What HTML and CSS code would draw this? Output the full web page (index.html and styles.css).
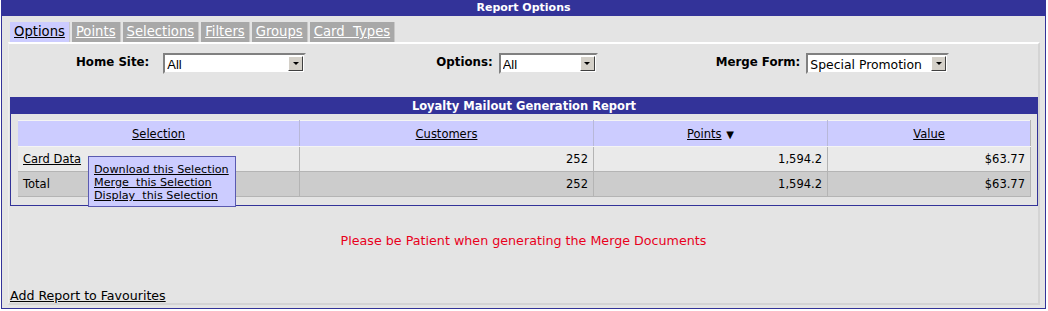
FILE: index.html
```html
<!DOCTYPE html>
<html lang="en">
<head>
  <meta charset="UTF-8">
  <title>Report Options</title>
  <link rel="stylesheet" href="styles.css">
</head>
<body>

  <div class="frame">
    <div class="frame-title">Report Options</div>

    <div class="tabs">
      <a href="#" class="tab active">Options</a>
      <a href="#" class="tab">Points</a>
      <a href="#" class="tab">Selections</a>
      <a href="#" class="tab">Filters</a>
      <a href="#" class="tab">Groups</a>
      <a href="#" class="tab">Card&nbsp;&nbsp;Types</a>
    </div>

    <div class="panel">
      <div class="filters">
        <div class="filter home">
          <label>Home Site:</label>
          <div class="dropdown wide">
            <select><option>All</option></select>
            <span class="drop-btn"></span>
          </div>
        </div>
        <div class="filter opts">
          <label>Options:</label>
          <div class="dropdown narrow">
            <select><option>All</option></select>
            <span class="drop-btn"></span>
          </div>
        </div>
        <div class="filter merge">
          <label>Merge Form:</label>
          <div class="dropdown wide">
            <select class="tahoma"><option>Special Promotion</option></select>
            <span class="drop-btn"></span>
          </div>
        </div>
      </div>

      <div class="report">
        <div class="report-title">Loyalty Mailout Generation Report</div>
        <table class="grid">
          <tr class="head">
            <th class="c1"><a href="#">Selection</a></th>
            <th class="c2"><a href="#">Customers</a></th>
            <th class="c3"><a href="#">Points</a> <span class="sort">&#9660;</span></th>
            <th class="c4"><a href="#">Value</a></th>
          </tr>
          <tr class="row">
            <td class="name"><a href="#">Card Data</a></td>
            <td>252</td>
            <td>1,594.2</td>
            <td>$63.77</td>
          </tr>
          <tr class="total">
            <td class="name">Total</td>
            <td>252</td>
            <td>1,594.2</td>
            <td>$63.77</td>
          </tr>
        </table>

        <div class="popup">
          <a href="#">Download this Selection</a>
          <a href="#">Merge&nbsp; this Selection</a>
          <a href="#">Display&nbsp; this Selection</a>
        </div>
      </div>

      <p class="notice">Please be Patient when generating the Merge Documents</p>

      <a href="#" class="favourite">Add Report to Favourites</a>
    </div>
  </div>

</body>
</html>
```

FILE: styles.css
```css
body {
  margin: 0;
  font-family: "DejaVu Sans", Verdana, sans-serif;
  font-size: 11.5px;
  color: #000;
  background: #fff;
}
a {
  color: #000;
}
.frame {
  margin: 0 2px 0 1px;
  height: 308px;
  border: 1px solid #333399;
  border-top: none;
  background: #e4e4e4;
  display: flex;
  flex-direction: column;
}
.frame-title {
  background: #333399;
  color: #fff;
  font-weight: bold;
  font-size: 11px;
  text-align: center;
  height: 16px;
  line-height: 16px;
}
.tabs {
  display: flex;
  gap: 2px;
  margin: 6px 0 0 8px;
}
.tab {
  display: block;
  background: #a8a8a8;
  color: #fff;
  font-size: 13.2px;
  padding: 0 4px;
  height: 20px;
  line-height: 20px;
  border-right: 1px solid #c8c8c8;
}
.tab.active {
  background: #ccccff;
  color: #000;
}
.panel {
  flex: 1;
  margin: 0 5px 3px 6px;
  border-top: 2px solid #fff;
  border-left: 1px solid #ececec;
  border-right: 2px solid #d4d4d4;
  border-bottom: 2px solid #d4d4d4;
  display: flex;
  flex-direction: column;
}
.filters {
  display: flex;
  align-items: flex-start;
  padding-top: 9px;
  height: 44px;
}
.filter {
  display: flex;
  align-items: flex-start;
}
.filter label {
  font-weight: bold;
  font-size: 11.8px;
  padding-top: 2px;
}
.home {
  margin-left: 67px;
  gap: 14px;
}
.opts {
  margin-left: 130px;
  gap: 6px;
}
.merge {
  margin-left: 118px;
  gap: 6px;
}
.dropdown {
  display: flex;
  align-items: center;
  height: 17px;
  background: #fff;
  border-top: 2px solid #808080;
  border-left: 2px solid #808080;
  border-right: 2px solid #e4e4e4;
  border-bottom: 2px solid #e4e4e4;
}
.dropdown.wide {
  width: 139px;
}
.dropdown.narrow {
  width: 95px;
}
.dropdown select {
  appearance: none;
  -webkit-appearance: none;
  border: none;
  background: transparent;
  flex: 1;
  min-width: 0;
  padding: 2px 0 0 2px;
  font-family: "Liberation Sans", Arial, sans-serif;
  font-size: 13px;
  color: #000;
  outline: none;
}
.dropdown select.tahoma {
  font-family: "DejaVu Sans", Verdana, sans-serif;
  font-size: 12.4px;
}
.drop-btn {
  width: 13px;
  height: 13px;
  margin-right: 1px;
  background: #d4d0c8;
  border-top: 1px solid #fff;
  border-left: 1px solid #fff;
  border-right: 1px solid #404040;
  border-bottom: 1px solid #404040;
  display: flex;
  align-items: center;
  justify-content: center;
}
.drop-btn::after {
  content: "";
  border-left: 3px solid transparent;
  border-right: 3px solid transparent;
  border-top: 3px solid #000;
}
.report {
  margin: 0 0 0 1px;
  border: 1px solid #333399;
  padding: 0 6px 8px 7px;
  position: relative;
}
.report-title {
  background: #333399;
  color: #fff;
  font-weight: bold;
  text-align: center;
  height: 16px;
  line-height: 16px;
  margin: 0 -6px 6px -7px;
}
.grid {
  width: 100%;
  border-collapse: collapse;
  border-top: 1px solid #f4f4f4;
}
.grid th,
.grid td {
  height: 24px;
  padding: 0 5px;
  font-weight: normal;
}
.grid th {
  height: 25px;
  background: #ccccff;
  border-right: 1px solid #b8b8d8;
  border-bottom: 1px solid #f4f4f4;
  text-align: center;
}
.grid td {
  text-align: right;
  border-right: 1px solid #b4b4b4;
  border-bottom: 1px solid #b4b4b4;
}
.grid th:last-child,
.grid td:last-child {
  border-right: 1px solid #b4b4b4;
}
.grid td.name {
  text-align: left;
}
.c1 { width: 271px; }
.c2 { width: 283px; }
.c3 { width: 223px; }
.row td {
  background: #eaeaea;
}
.total td {
  background: #cccccc;
}
.sort {
  font-size: 10px;
  margin-left: 1px;
}
.popup {
  position: absolute;
  left: 77px;
  top: 58px;
  width: 138px;
  padding: 6px 3px 4px 5px;
  background: #ccccff;
  border: 1px solid #5a5ab0;
  display: flex;
  flex-direction: column;
  font-size: 11.2px;
  line-height: 13px;
  white-space: nowrap;
}
.notice {
  text-align: center;
  color: #e8001c;
  font-size: 12.7px;
  margin: 27px 0 0 0;
}
.favourite {
  margin: auto 0 0 1px;
  font-size: 12.6px;
  line-height: 15px;
}
```
